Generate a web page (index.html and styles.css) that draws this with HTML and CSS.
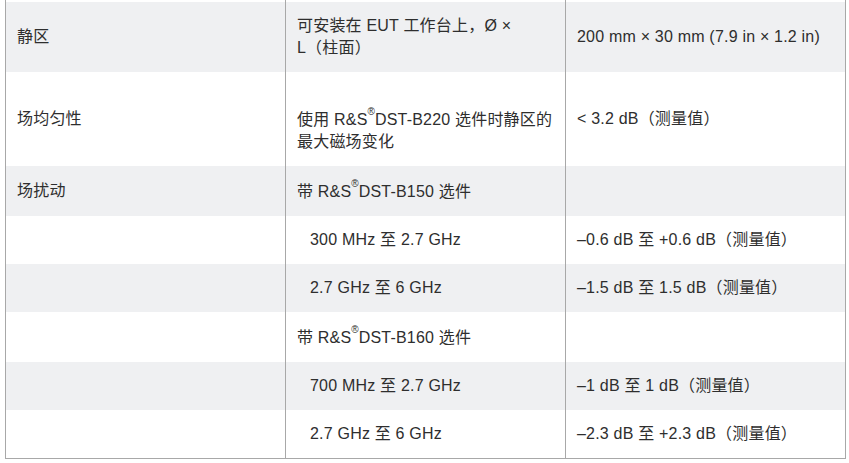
FILE: index.html
```html
<!DOCTYPE html>
<html lang="zh-CN">
<head>
<meta charset="utf-8">
<title>技术规格</title>
<link rel="stylesheet" href="styles.css">
</head>
<body>
<table class="spec">
  <colgroup><col class="c"><col class="c"><col class="c"></colgroup>
  <tbody>
    <tr class="cut"><td></td><td></td><td></td></tr>
    <tr class="alt">
      <td>静区</td>
      <td>可安装在 EUT 工作台上，Ø ×<br>L（柱面）</td>
      <td>200 mm × 30 mm (7.9 in × 1.2 in)</td>
    </tr>
    <tr>
      <td>场均匀性</td>
      <td><br>使用 R&amp;S<sup>®</sup>DST-B220 选件时静区的最大磁场变化</td>
      <td>&lt; 3.2 dB（测量值）</td>
    </tr>
    <tr class="alt">
      <td>场扰动</td>
      <td>带 R&amp;S<sup>®</sup>DST-B150 选件</td>
      <td></td>
    </tr>
    <tr>
      <td></td>
      <td class="sub">300 MHz 至 2.7 GHz</td>
      <td>–0.6 dB 至 +0.6 dB（测量值）</td>
    </tr>
    <tr class="alt">
      <td></td>
      <td class="sub">2.7 GHz 至 6 GHz</td>
      <td>–1.5 dB 至 1.5 dB（测量值）</td>
    </tr>
    <tr>
      <td></td>
      <td>带 R&amp;S<sup>®</sup>DST-B160 选件</td>
      <td></td>
    </tr>
    <tr class="alt">
      <td></td>
      <td class="sub">700 MHz 至 2.7 GHz</td>
      <td>–1 dB 至 1 dB（测量值）</td>
    </tr>
    <tr>
      <td></td>
      <td class="sub">2.7 GHz 至 6 GHz</td>
      <td>–2.3 dB 至 +2.3 dB（测量值）</td>
    </tr>
  </tbody>
</table>
</body>
</html>
```

FILE: styles.css
```css
html, body {
  margin: 0;
  padding: 0;
  background: #ffffff;
}

body {
  padding-left: 5px;
  font-family: "Liberation Sans", Arial, "Noto Sans CJK SC", sans-serif;
  font-size: 16px;
  line-height: 22px;
  letter-spacing: 0.2px;
  color: #2e2e2e;
}

.spec {
  width: 841px;
  table-layout: fixed;
  border-collapse: collapse;
  border-left: 1px solid #a8a8a8;
  border-right: 1px solid #a8a8a8;
  border-bottom: 1px solid #a8a8a8;
}

.spec td {
  padding: 13px 7px 13px 11px;
  vertical-align: middle;
  border-left: 1px solid #a8a8a8;
  border-right: 1px solid #a8a8a8;
}

.spec tr.cut td {
  padding: 0;
  height: 2px;
  line-height: 0;
}

.spec tr.alt td {
  background: #eff0f2;
}

.spec td.sub {
  padding-left: 24px;
}

sup {
  font-size: 10px;
  line-height: 10px;
  letter-spacing: 0;
  vertical-align: 10px;
}
```
